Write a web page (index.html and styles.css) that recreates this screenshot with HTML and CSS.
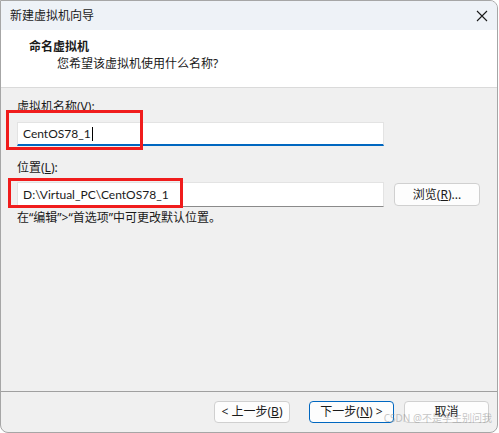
FILE: index.html
```html
<!DOCTYPE html>
<html lang="zh-CN">
<head>
<meta charset="utf-8">
<title>新建虚拟机向导</title>
<link rel="stylesheet" href="styles.css">
</head>
<body>
<div class="window">
  <div class="titlebar">
    <span class="title">新建虚拟机向导</span>
    <svg class="close" width="12" height="12" viewBox="0 0 12 12"><path d="M1 1L11 11M11 1L1 11" stroke="#1a1a1a" stroke-width="1.1" fill="none"/></svg>
  </div>
  <div class="header">
    <div class="h-title">命名虚拟机</div>
    <div class="h-sub">您希望该虚拟机使用什么名称?</div>
  </div>
  <div class="content">
    <div class="label">虚拟机名称(<u>V</u>):</div>
    <div class="input input-active"><span class="val">CentOS78_1</span><span class="caret"></span></div>
    <div class="label label2">位置(<u>L</u>):</div>
    <div class="row">
      <div class="input input-plain"><span class="val">D:\Virtual_PC\CentOS78_1</span></div>
      <div class="btn browse">浏览(<u>R</u>)...</div>
    </div>
    <div class="hint">在“编辑”&gt;“首选项”中可更改默认位置。</div>
    <div class="mark mark1"></div>
    <div class="mark mark2"></div>
  </div>
  <div class="footer">
    <div class="btn back">&lt; 上一步(<u>B</u>)</div>
    <div class="btn next">下一步(<u>N</u>) &gt;</div>
    <div class="btn cancel">取消</div>
    <div class="watermark">CSDN @不是学生别问我</div>
  </div>
</div>
</body>
</html>
```

FILE: styles.css
```css
* { box-sizing: border-box; }
html, body { margin: 0; padding: 0; }
body {
  width: 499px;
  height: 433px;
  background: #ffffff;
  font-family: "Noto Sans", "Noto Sans CJK SC", sans-serif;
  font-size: 12px;
  color: #1a1a1a;
  overflow: hidden;
}
u { text-decoration: underline; text-underline-offset: 1px; }
.window {
  width: 498px;
  height: 433px;
  border: 1px solid #a6a6a6;
  border-radius: 0 8px 8px 8px;
  overflow: hidden;
  display: flex;
  flex-direction: column;
  background: #f0f0f0;
}
.titlebar {
  height: 29px;
  background: #eef2f7;
  display: flex;
  align-items: center;
  padding: 0 0 0 9px;
}
.title { line-height: 16px; }
.close { margin-left: auto; margin-right: 9px; }
.header {
  height: 58px;
  background: #ffffff;
  border-bottom: 1px solid #dadada;
  padding: 9px 0 0 28px;
}
.h-title { font-weight: bold; line-height: 16px; }
.h-sub { line-height: 16px; padding-left: 28px; margin-top: 1px; }
.content {
  flex: 1;
  position: relative;
  padding: 11px 12px 0 16px;
}
.label { line-height: 16px; }
.label2 { margin-top: 14px; }
.input {
  background: #ffffff;
  display: flex;
  align-items: center;
  padding-left: 5px;
}
.val { font-family: "Lato", "Noto Sans CJK SC", sans-serif; font-size: 12px; }
.input-active {
  margin-top: 7px;
  width: 367px;
  height: 24px;
  border: 1px solid #e3e3e3;
  border-bottom: 2px solid #0067c0;
}
.caret { width: 1px; height: 14px; background: #000; margin-left: 1px; }
.row { display: flex; align-items: center; margin-top: 6px; gap: 10px; }
.input-plain {
  width: 367px;
  height: 25px;
  border: 1px solid #e3e3e3;
  border-bottom: 1px solid #8a8a8a;
}
.btn {
  height: 23px;
  background: #fdfdfd;
  border: 1px solid #d0d0d0;
  border-radius: 4px;
  display: flex;
  align-items: center;
  justify-content: center;
  line-height: 16px;
}
.browse { width: 86px; }
.hint { margin-top: 3px; line-height: 16px; }
.mark {
  position: absolute;
  border: 3px solid #f01c1c;
}
.mark1 { left: 5px; top: 22px; width: 137px; height: 40px; }
.mark2 { left: 7px; top: 90px; width: 175px; height: 30px; }
.footer {
  height: 41px;
  border-top: 1px solid #a0a0a0;
  display: flex;
  align-items: flex-start;
  justify-content: flex-end;
  padding: 9px 8px 0 0;
  position: relative;
}
.footer .btn { height: 22px; }
.back { width: 76px; margin-right: 19px; }
.next { width: 85px; margin-right: 10px; border-color: #0067c0; }
.cancel { width: 85px; }
.watermark {
  position: absolute;
  right: 5px;
  top: 21px;
  font-size: 10px;
  line-height: 11px;
  color: rgba(140, 140, 140, 0.5);
  pointer-events: none;
}
```
